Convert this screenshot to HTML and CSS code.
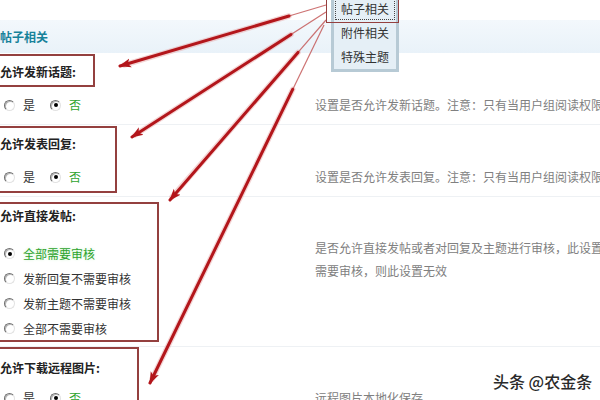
FILE: index.html
```html
<!DOCTYPE html>
<html lang="zh-CN">
<head>
<meta charset="utf-8">
<title>帖子相关</title>
<link rel="stylesheet" href="styles.css">
</head>
<body>
<div class="page">
  <div class="topstrip"></div>
  <div class="section-head">帖子相关</div>

  <div class="row r1">
    <div class="opt">
      <div class="title">允许发新话题:</div>
      <div class="radios">
        <span class="radio"><span class="rb"></span>是</span>
        <span class="radio on"><span class="rb"></span>否</span>
      </div>
    </div>
    <div class="desc">设置是否允许发新话题。注意：只有当用户组阅读权限</div>
  </div>

  <div class="row r2">
    <div class="opt">
      <div class="title">允许发表回复:</div>
      <div class="radios">
        <span class="radio"><span class="rb"></span>是</span>
        <span class="radio on"><span class="rb"></span>否</span>
      </div>
    </div>
    <div class="desc">设置是否允许发表回复。注意：只有当用户组阅读权限</div>
  </div>

  <div class="row r3">
    <div class="opt">
      <div class="title">允许直接发帖:</div>
      <div class="radios list">
        <span class="radio on glow"><span class="rb"></span>全部需要审核</span>
        <span class="radio"><span class="rb"></span>发新回复不需要审核</span>
        <span class="radio"><span class="rb"></span>发新主题不需要审核</span>
        <span class="radio"><span class="rb"></span>全部不需要审核</span>
      </div>
    </div>
    <div class="desc">是否允许直接发帖或者对回复及主题进行审核，此设置<br>需要审核，则此设置无效</div>
  </div>

  <div class="row r4">
    <div class="opt">
      <div class="title">允许下载远程图片:</div>
      <div class="radios">
        <span class="radio"><span class="rb"></span>是</span>
        <span class="radio on"><span class="rb"></span>否</span>
      </div>
    </div>
    <div class="desc">远程图片本地化保存</div>
  </div>

  <div class="dropdown">
    <div class="item sel">帖子相关</div>
    <div class="item">附件相关</div>
    <div class="item">特殊主题</div>
  </div>

  <div class="mark m-sel"></div>
  <div class="mark m1"></div>
  <div class="mark m2"></div>
  <div class="mark m3"></div>
  <div class="mark m4"></div>

  <svg class="arrows" width="600" height="400" viewBox="0 0 600 400">
    <defs>
      <marker id="ah" markerWidth="13" markerHeight="10" refX="11" refY="5" orient="auto" markerUnits="userSpaceOnUse">
        <path d="M0,0.5 L12,5 L0,9.5 L3,5 Z" fill="#b3161b"/>
      </marker>
    </defs>
    <g class="halo">
      <line x1="289" y1="16" x2="124" y2="65"/>
      <line x1="291" y1="34.5" x2="135" y2="135"/>
      <line x1="298" y1="52.4" x2="172" y2="197"/>
      <line x1="292.7" y1="89.4" x2="152" y2="379"/>
    </g>
    <g class="thin">
      <line x1="326" y1="5" x2="289" y2="16"/>
      <line x1="326" y1="12" x2="291" y2="34.5"/>
      <line x1="326" y1="20" x2="298" y2="52.4"/>
      <line x1="324" y1="25" x2="292.7" y2="89.4"/>
    </g>
    <g class="thick">
      <line x1="289" y1="16" x2="120" y2="66" marker-end="url(#ah)"/>
      <line x1="291" y1="34.5" x2="132" y2="137" marker-end="url(#ah)"/>
      <line x1="298" y1="52.4" x2="170" y2="200" marker-end="url(#ah)"/>
      <line x1="292.7" y1="89.4" x2="150" y2="383" marker-end="url(#ah)"/>
    </g>
  </svg>

  <div class="wm">头条 @农金条</div>
</div>
</body>
</html>
```

FILE: styles.css
```css
html, body {
  margin: 0;
  padding: 0;
  height: 100%;
  overflow: hidden;
  background: #fff;
}

.page {
  position: relative;
  width: 600px;
  height: 400px;
  overflow: hidden;
  font-family: "Noto Sans CJK SC", "Noto Sans", sans-serif;
  font-size: 12px;
  color: #333;
}

.topstrip {
  height: 20px;
}

.section-head {
  height: 33px;
  line-height: 33px;
  background: linear-gradient(to bottom, #f3f8fc, #e9f2f9);
  color: #17829a;
  font-weight: bold;
}

.row {
  display: grid;
  grid-template-columns: 315px 1fr;
  padding: 9px 0 8px;
  border-bottom: 1px solid #eef1f4;
}

.title {
  font-weight: bold;
  line-height: 20px;
  color: #222;
  white-space: nowrap;
}

.radios {
  display: flex;
  margin-top: 13px;
  line-height: 20px;
  white-space: nowrap;
}

.radio {
  display: flex;
  align-items: center;
  color: #333;
}

.rb {
  position: relative;
  width: 11px;
  height: 11px;
  box-sizing: border-box;
  margin: 0 8px 0 4px;
  border-radius: 50%;
  border: 1px solid;
  border-color: #6f6f6f #e2e2e2 #e2e2e2 #6f6f6f;
  box-shadow: inset 1px 1px 0 #b8b8b8;
  background: #fff;
}

.radio + .radio .rb {
  margin-left: 15px;
}

.radio.on {
  color: #2ea32e;
}

.radio.on .rb::after {
  content: "";
  position: absolute;
  left: 2.5px;
  top: 2.5px;
  width: 4px;
  height: 4px;
  border-radius: 50%;
  background: #000;
}

.radio.glow {
  text-shadow: 0 0 3px #c9f0c9;
}

.radios.list {
  flex-direction: column;
  margin-top: 15px;
}

.radios.list .radio {
  height: 25px;
}

.radios.list .radio + .radio .rb {
  margin-left: 4px;
}

.r3 {
  padding-bottom: 5px;
}

.r4 {
  padding-top: 11px;
}

.r4 .radios {
  margin-top: 10px;
}

.desc {
  margin-top: 32px;
  line-height: 22px;
  color: #808080;
  white-space: nowrap;
}

.r3 .desc {
  margin-top: 30px;
  line-height: 23px;
}

.r4 .desc {
  margin-top: 29px;
}

/* dropdown menu overlaying the page */
.dropdown {
  position: absolute;
  left: 331px;
  top: -6px;
  width: 68px;
  box-sizing: border-box;
  border: 3px solid #b7cad5;
  background: #e5eff6;
}

.item {
  height: 24px;
  line-height: 24px;
  padding-left: 7px;
  color: #333;
}

.item.sel {
  outline: 1px dotted #444;
  outline-offset: -2px;
}

/* annotation rectangles */
.mark {
  position: absolute;
  box-sizing: border-box;
  border: 2px solid #94403f;
}

.m-sel { left: 326px; top: -3px;  width: 73px;  height: 26px; border-width: 1.5px; }
.m1    { left: -5px;  top: 54px;  width: 100px; height: 33px; }
.m2    { left: -5px;  top: 126px; width: 122px; height: 67px; }
.m3    { left: -5px;  top: 202px; width: 164px; height: 140px; }
.m4    { left: -5px;  top: 347px; width: 144px; height: 70px; }

/* annotation arrows */
.arrows {
  position: absolute;
  left: 0;
  top: 0;
  pointer-events: none;
}

.halo line {
  stroke: #e7a3a3;
  stroke-width: 5.5;
  stroke-linecap: round;
  opacity: 0.45;
}

.thin line {
  stroke: #c55a5a;
  stroke-width: 1.2;
  opacity: 0.85;
}

.thick line {
  stroke: #b3161b;
  stroke-width: 3;
  stroke-linecap: round;
}

/* watermark */
.wm {
  position: absolute;
  left: 493px;
  top: 370px;
  font-size: 16px;
  line-height: 22px;
  color: #2a2a2a;
  font-weight: 500;
  text-shadow: 0 0 2px #fff, 0 0 3px #fff;
  white-space: nowrap;
}
```
